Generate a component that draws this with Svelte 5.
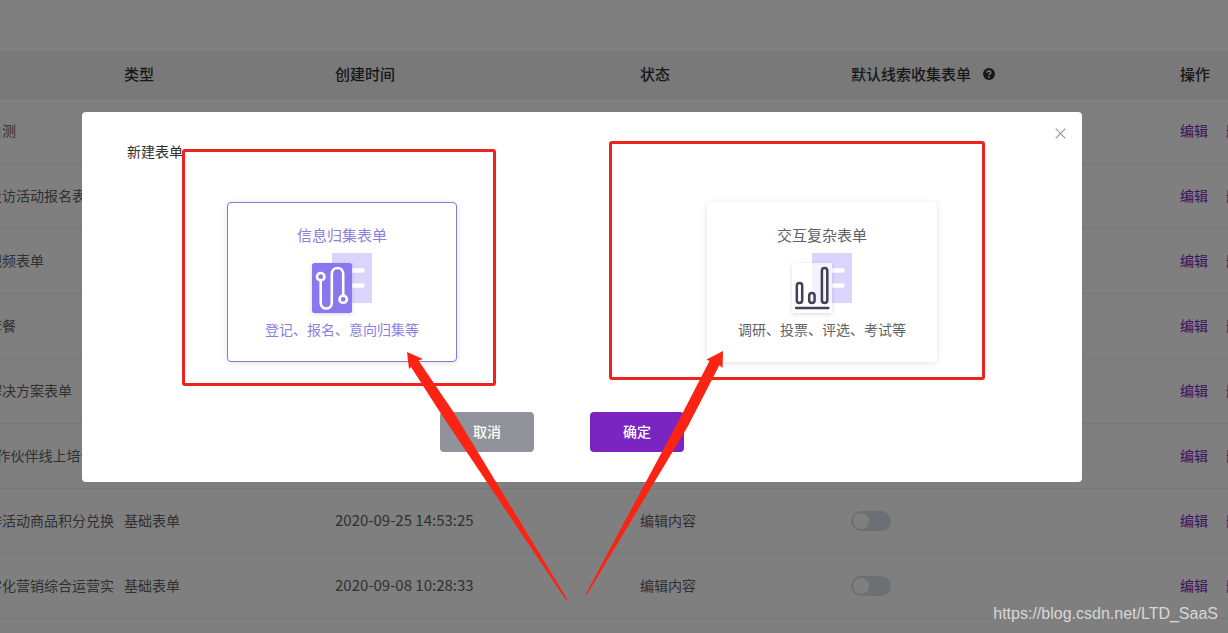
<script>
  const rows = [
    { name: '自测' },
    { name: '走访活动报名表' },
    { name: '视频表单' },
    { name: '套餐' },
    { name: '解决方案表单' },
    { name: 'A作伙伴线上培训' },
    { name: '作活动商品积分兑换', type: '基础表单', created: '2020-09-25 14:53:25', status: '编辑内容' },
    { name: '字化营销综合运营实', type: '基础表单', created: '2020-09-08 10:28:33', status: '编辑内容' },
    { name: '' }
  ];
  let selected = $state('collect');
</script>

<div class="page">
  <table>
    <colgroup>
      <col class="c-name" /><col class="c-type" /><col class="c-time" />
      <col class="c-status" /><col class="c-default" /><col class="c-action" />
    </colgroup>
    <thead>
      <tr>
        <th></th>
        <th>类型</th>
        <th>创建时间</th>
        <th>状态</th>
        <th>
          <span class="help">默认线索收集表单
            <svg width="12" height="12" viewBox="0 0 12 12" aria-hidden="true">
              <circle cx="6" cy="6" r="6" fill="#303133" />
              <path d="M4.1 4.7C4.1 2.4 7.9 2.4 7.9 4.6C7.9 5.9 6 5.8 6 7.3" fill="none" stroke="#f5f5f5" stroke-width="1.4" />
              <circle cx="6" cy="9.1" r=".9" fill="#f5f5f5" />
            </svg>
          </span>
        </th>
        <th>操作</th>
      </tr>
    </thead>
    <tbody>
      {#each rows as row}
        <tr>
          <td>{row.name}</td>
          <td>{row.type ?? ''}</td>
          <td class="time">{row.created ?? ''}</td>
          <td>{row.status ?? ''}</td>
          <td class="toggle">
            {#if row.type}
              <input class="switch" type="checkbox" aria-label="默认线索收集表单" />
            {/if}
          </td>
          <td>
            {#if row.name}
              <span class="actions"><a href="#edit">编辑</a><a href="#delete">删除</a></span>
            {/if}
          </td>
        </tr>
      {/each}
    </tbody>
  </table>

  <div class="mask">
    <div class="dialog" role="dialog" aria-labelledby="dialog-title">
      <header>
        <h2 id="dialog-title">新建表单</h2>
        <button class="close" aria-label="关闭">
          <svg width="11" height="11" viewBox="0 0 11 11"><path d="M.7 .7L10.3 10.3M10.3 .7L.7 10.3" stroke="#909399" stroke-width="1.1" /></svg>
        </button>
      </header>

      <div class="cards">
        <button class="card" class:selected={selected === 'collect'} onclick={() => (selected = 'collect')}>
          <span class="name">信息归集表单</span>
          <svg width="76" height="68" viewBox="304 251 76 68" aria-hidden="true">
            <path d="M332 253h40v50h-40z" fill="#dad5fc" />
            <path d="M350 270.500h12.500M350 285.500h12.500" stroke="#fff" stroke-width="4.600" stroke-linecap="round" />
            <rect class="sheet-shadow" x="312" y="263" width="40" height="50" rx="2.500" fill="#8878ee" />
            <g fill="none" stroke="#fff" stroke-width="2.600">
              <circle cx="320.700" cy="276.700" r="3.700" />
              <circle cx="343.200" cy="299.300" r="3.700" />
              <path d="M320.700 280.400V302.500C320.700 310.500 331.800 310.500 331.800 302.500V274C331.800 266 343.200 266 343.200 274V295.600" />
            </g>
          </svg>
          <span class="desc">登记、报名、意向归集等</span>
        </button>
        <button class="card" class:selected={selected === 'complex'} onclick={() => (selected = 'complex')}>
          <span class="name">交互复杂表单</span>
          <svg width="76" height="68" viewBox="784 251 76 68" aria-hidden="true">
            <path d="M812 253h40v50h-40z" fill="#dad5fc" />
            <path d="M830 270.500h12.500M830 285.500h12.500" stroke="#fff" stroke-width="4.600" stroke-linecap="round" />
            <rect class="sheet-shadow" x="792" y="263" width="40" height="50" rx="2.500" fill="#fff" />
            <path d="M812 263h20v40h-20z" fill="#f4f2fe" />
            <g fill="none" stroke="#444057" stroke-width="2.500">
              <rect x="796.800" y="283" width="5.400" height="20" rx="2.700" />
              <rect x="809.200" y="293" width="5.400" height="10" rx="2.700" />
              <rect x="821.900" y="268" width="5.400" height="35" rx="2.700" />
              <path d="M796 308h32.500" stroke-linecap="round" stroke-width="2.300" />
            </g>
          </svg>
          <span class="desc">调研、投票、评选、考试等</span>
        </button>
      </div>

      <footer>
        <button class="btn cancel">取消</button>
        <button class="btn confirm">确定</button>
      </footer>

      <svg class="marks" width="1000" height="500" viewBox="82 112 1000 500" aria-hidden="true">
        <g fill="none" stroke="#ed241d" stroke-width="3">
          <rect x="183.500" y="150.500" width="311" height="234" rx="1.500" />
          <rect x="610.500" y="142.500" width="373" height="236" rx="1.500" />
        </g>
        <g fill="#fb2314">
          <path d="M407 352L423 359L418.500 360.500L453.500 412L567.300 599.300L566 600L440.500 413L411 367L409 369Z" />
          <path d="M723 351L722.500 368L719.500 365L688 426L587 594.500L585.800 594L678 422L709.500 361L706.500 359.500Z" />
        </g>
      </svg>
    </div>
  </div>

  <div class="watermark">https://blog.csdn.net/LTD_SaaS</div>
</div>

<style>
  :global(body) { background: #fff; }
  .page {
    position: relative;
    height: 100vh;
    overflow: hidden;
    box-sizing: border-box;
    padding-top: 51px;
    font: 14px/20px "Noto Sans CJK SC", sans-serif;
    color: #606266;
  }
  table {
    table-layout: fixed;
    border-collapse: separate;
    border-spacing: 0;
    width: calc(100% + 46px);
    margin-left: -12px;
  }
  .c-name { width: 136px; }
  .c-type, .c-status { width: 211px; }
  .c-time { width: 305px; }
  .c-default { width: 329px; }
  .c-action { width: 82px; }
  th, td {
    box-sizing: border-box;
    padding: 0 0 2px;
    text-align: left;
    white-space: nowrap;
  }
  th {
    height: 48px;
    background: #f3f3f3;
    color: #303133;
    font-size: 15px;
    font-weight: 500;
  }
  td { height: 65px; border-bottom: 1px solid #ebeef5; }
  td.toggle { padding: 0; }
  .time { font-size: 15px; }
  .help { display: flex; align-items: center; gap: 12px; }
  .actions { display: flex; gap: 18px; }
  a { color: #7a25c2; text-decoration: none; }
  .switch {
    display: block;
    appearance: none;
    box-sizing: border-box;
    width: 40px;
    height: 20px;
    margin: 0;
    padding: 2px;
    border-radius: 10px;
    background: #dcdfe6;
  }
  .switch::before {
    content: "";
    display: block;
    width: 16px;
    height: 16px;
    border-radius: 50%;
    background: #fff;
  }
  .switch:checked { background: #7a25c2; }
  .switch:checked::before { margin-left: 20px; }
  .mask {
    position: absolute;
    inset: 0;
    display: flex;
    justify-content: center;
    align-items: flex-start;
    padding: 112px 64px 0 0;
    background: rgba(0, 0, 0, .5);
  }
  .dialog {
    position: relative;
    box-sizing: border-box;
    width: 1000px;
    padding: 10px 10px 30px 45px;
    border-radius: 4px;
    background: #fff;
  }
  header { display: flex; justify-content: space-between; align-items: flex-start; }
  h2 { margin: 19px 0 0; font-size: 14px; line-height: 20px; font-weight: 400; color: #303133; }
  button { font-family: inherit; border: 0; cursor: pointer; }
  .close { display: grid; place-items: center; width: 23px; height: 23px; padding: 0; background: none; }
  .cards { display: flex; justify-content: center; gap: 250px; margin: 41px 35px 0 0; }
  .card {
    display: flex;
    flex-direction: column;
    align-items: center;
    box-sizing: border-box;
    width: 230px;
    height: 160px;
    padding: 22px 0 0;
    border: 1px solid transparent;
    border-radius: 4px;
    background: #fff;
    color: #606266;
    box-shadow: 0 1px 6px rgba(0, 0, 0, .12);
  }
  .card.selected { border-color: #8679d2; color: #8d7ee0; }
  .name { font-size: 15px; line-height: 20px; margin-bottom: 6px; }
  .desc { font-size: 14px; line-height: 20px; }
  .sheet-shadow { filter: drop-shadow(0 1px 2px rgba(60, 50, 120, .2)); }
  footer { display: flex; justify-content: center; gap: 56px; margin: 50px 75px 0 0; }
  .btn { width: 94px; height: 40px; padding: 0 0 2px; border-radius: 4px; font-size: 14px; font-weight: 500; color: #fff; }
  .cancel { background: #909399; }
  .confirm { background: #7a25c2; }
  .marks { position: absolute; top: 0; left: 0; pointer-events: none; }
  .watermark {
    position: absolute;
    right: 10px;
    bottom: 9px;
    font: 16px/20px "Liberation Sans", sans-serif;
    color: rgba(255, 255, 255, .7);
  }
</style>
